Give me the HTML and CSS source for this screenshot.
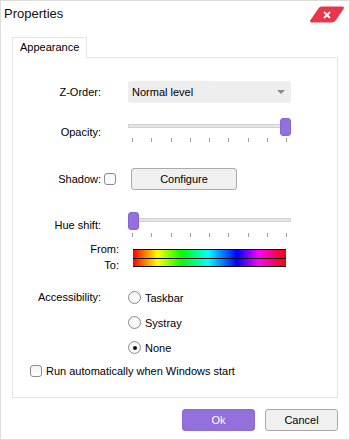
FILE: index.html
```html
<!DOCTYPE html>
<html>
<head>
<meta charset="utf-8">
<link rel="stylesheet" href="styles.css">
</head>
<body>
<div class="window">
  <div class="titlebar">
    <span class="title">Properties</span>
    <button class="close" aria-label="Close">
      <svg width="36" height="17" viewBox="0 0 36 17">
        <path d="M12 0.5 H33 Q36 0.5 34.5 3 L27 14 Q25.5 16.5 22 16.5 H3 Q0 16.5 1.5 14 L9 3 Q10.5 0.5 12 0.5 Z" fill="#e8374b"/>
        <path d="M15.6 6.6 L20.4 11.4 M20.4 6.6 L15.6 11.4" stroke="#fff" stroke-width="2" stroke-linecap="round"/>
      </svg>
    </button>
  </div>
  <div class="tabs">
    <div class="tab">Appearance</div>
  </div>
  <div class="panel">
    <div class="row r1">
      <label class="lbl">Z-Order:</label>
      <div class="ctl">
        <div class="combo"><span>Normal level</span><span class="arrow"></span></div>
      </div>
    </div>
    <div class="row r2">
      <label class="lbl">Opacity:</label>
      <div class="ctl">
        <div class="slider">
          <div class="groove"></div>
          <div class="handle end"></div>
          <div class="ticks"><i></i><i></i><i></i><i></i><i></i><i></i><i></i><i></i><i></i></div>
        </div>
      </div>
    </div>
    <div class="row r3">
      <label class="lbl">Shadow:</label>
      <div class="chkcell"><span class="check"></span></div>
      <div class="ctl"><button class="btn configure">Configure</button></div>
    </div>
    <div class="row r4">
      <label class="lbl">Hue shift:</label>
      <div class="ctl">
        <div class="slider">
          <div class="groove"></div>
          <div class="handle start"></div>
          <div class="ticks t2"><i></i><i></i><i></i><i></i><i></i><i></i><i></i><i></i><i></i></div>
        </div>
      </div>
    </div>
    <div class="row r5">
      <div class="fromto">From:<br>To:</div>
      <div class="ctl">
        <div class="bars">
          <div class="bar"></div>
          <div class="bar"></div>
        </div>
      </div>
    </div>
    <div class="row r6">
      <label class="lbl top">Accessibility:</label>
      <div class="ctl radios">
        <div class="radio"><span class="dot"></span>Taskbar</div>
        <div class="radio"><span class="dot"></span>Systray</div>
        <div class="radio"><span class="dot on"></span>None</div>
      </div>
    </div>
    <div class="run"><span class="check"></span>Run automatically when Windows start</div>
  </div>
  <div class="footer">
    <button class="btn ok">Ok</button>
    <button class="btn cancel">Cancel</button>
  </div>
</div>
</body>
</html>
```

FILE: styles.css
```css
* { box-sizing: border-box; }
html, body { margin: 0; padding: 0; background: #fff; }
body { font-family: "Liberation Sans", Arial, sans-serif; font-size: 11px; color: #000; }

.window {
  width: 350px;
  height: 440px;
  border: 1px solid #dcdcdc;
  background: #fff;
  display: flex;
  flex-direction: column;
}
.titlebar {
  height: 36px;
  display: flex;
  justify-content: space-between;
  align-items: flex-start;
  padding: 4px 4px 0 3px;
}
.title { font-size: 13px; line-height: 18px; color: #111; }
.close {
  border: 0; padding: 0; margin: 1px 0 0 0; background: none;
  width: 36px; height: 17px; display: block;
}
.close svg { display: block; }

.tabs { display: flex; padding-left: 11px; height: 20px; }
.tab {
  width: 75px; height: 21px;
  border: 1px solid #e3e3e3; border-bottom: 0;
  background: #fff;
  padding-left: 7px;
  line-height: 19px;
  position: relative; z-index: 1;
  font-size: 11px;
}
.panel {
  margin-left: 11px;
  width: 326px;
  height: 341px;
  border: 1px solid #e3e3e3;
  padding: 23px 0 15px 0;
  display: flex;
  flex-direction: column;
}
.row {
  display: grid;
  grid-template-columns: 88px 27px 163px;
  align-items: center;
}
.lbl { grid-column: 1; text-align: right; }
.ctl { grid-column: 3; }
.r1 { height: 22px; }
.r2 { height: 24px; margin-top: 15px; }
.r2 .lbl { padding-top: 4px; }
.r3 { height: 22px; margin-top: 26px; }
.r4 { height: 25px; margin-top: 21px; }
.r4 .lbl { padding-top: 2px; }
.r5 { height: 32px; margin-top: 5px; }
.r6 { height: 75px; margin-top: 12px; align-items: start; }
.lbl.top { line-height: 25px; }

.combo {
  height: 22px;
  width: 163px;
  background: #eeeeee;
  border-radius: 3px;
  display: flex;
  align-items: center;
  justify-content: space-between;
  padding: 0 6px 0 4px;
}
.arrow {
  width: 0; height: 0;
  border-left: 4px solid transparent;
  border-right: 4px solid transparent;
  border-top: 4px solid #8a8a8a;
}

.slider { position: relative; height: 24px; width: 163px; }
.groove {
  position: absolute; left: 0; right: 0; top: 6px; height: 4px;
  background: #e6e6e6; border: 1px solid #d2d2d2;
}
.handle {
  position: absolute; top: 0; width: 11px; height: 18px;
  background: #9370db; border: 1px solid #8466d4; border-radius: 3px;
}
.handle.end { right: 0; }
.handle.start { left: 0; }
.ticks {
  position: absolute; left: 4px; right: 4px; top: 20px; height: 4px;
  display: flex; justify-content: space-between;
}
.ticks.t2 { top: 21px; }
.ticks i { display: block; width: 1px; height: 4px; background: #a0a0a0; }

.chkcell { grid-column: 2; display: flex; align-items: center; padding-left: 3px; }
.check {
  display: inline-block; width: 12px; height: 12px;
  border: 1px solid #8c8c8c; border-radius: 3px;
  background: linear-gradient(#f4f4f4, #ffffff);
}
.btn {
  font-family: inherit; font-size: 11px; color: #000;
  height: 22px;
  background: #f0f0f0;
  border: 1px solid #a9a9a9;
  border-radius: 3px;
  padding: 0;
}
.configure { width: 106px; margin-left: 3px; }

.fromto { grid-column: 1 / span 2; text-align: right; padding-right: 9px; line-height: 16px; align-self: start; }
.bars {
  margin-left: 5px; width: 153px; margin-top: 2px;
  border-top: 1px solid #000; border-bottom: 1px solid #000;
  display: flex; flex-direction: column;
}
.bar {
  height: 8px;
  background: linear-gradient(to right, #ff0000 0%, #ff8000 8%, #ffff00 16%, #00ff00 32%, #00ffff 49%, #0000ff 68%, #ff00ff 82%, #ff0000 100%);
}
.bar + .bar { border-top: 1px solid #000; }

.radios { display: flex; flex-direction: column; }
.radio { height: 25px; display: flex; align-items: center; gap: 4px; }
.dot {
  width: 13px; height: 13px; border-radius: 50%;
  border: 1px solid #8c8c8c;
  background: radial-gradient(circle, #ffffff 0%, #eeeeee 100%);
  display: flex; align-items: center; justify-content: center;
}
.dot.on::after {
  content: ""; width: 4px; height: 4px; border-radius: 50%; background: #111;
}

.run {
  height: 22px; display: flex; align-items: center; gap: 4px;
  padding-left: 17px;
}

.footer {
  display: flex; justify-content: flex-end; gap: 10px;
  padding: 11px 11px 0 0;
}
.ok, .cancel { width: 73px; }
.ok { background: #9370db; border-color: #8a6bd6; color: #fff; }
```
